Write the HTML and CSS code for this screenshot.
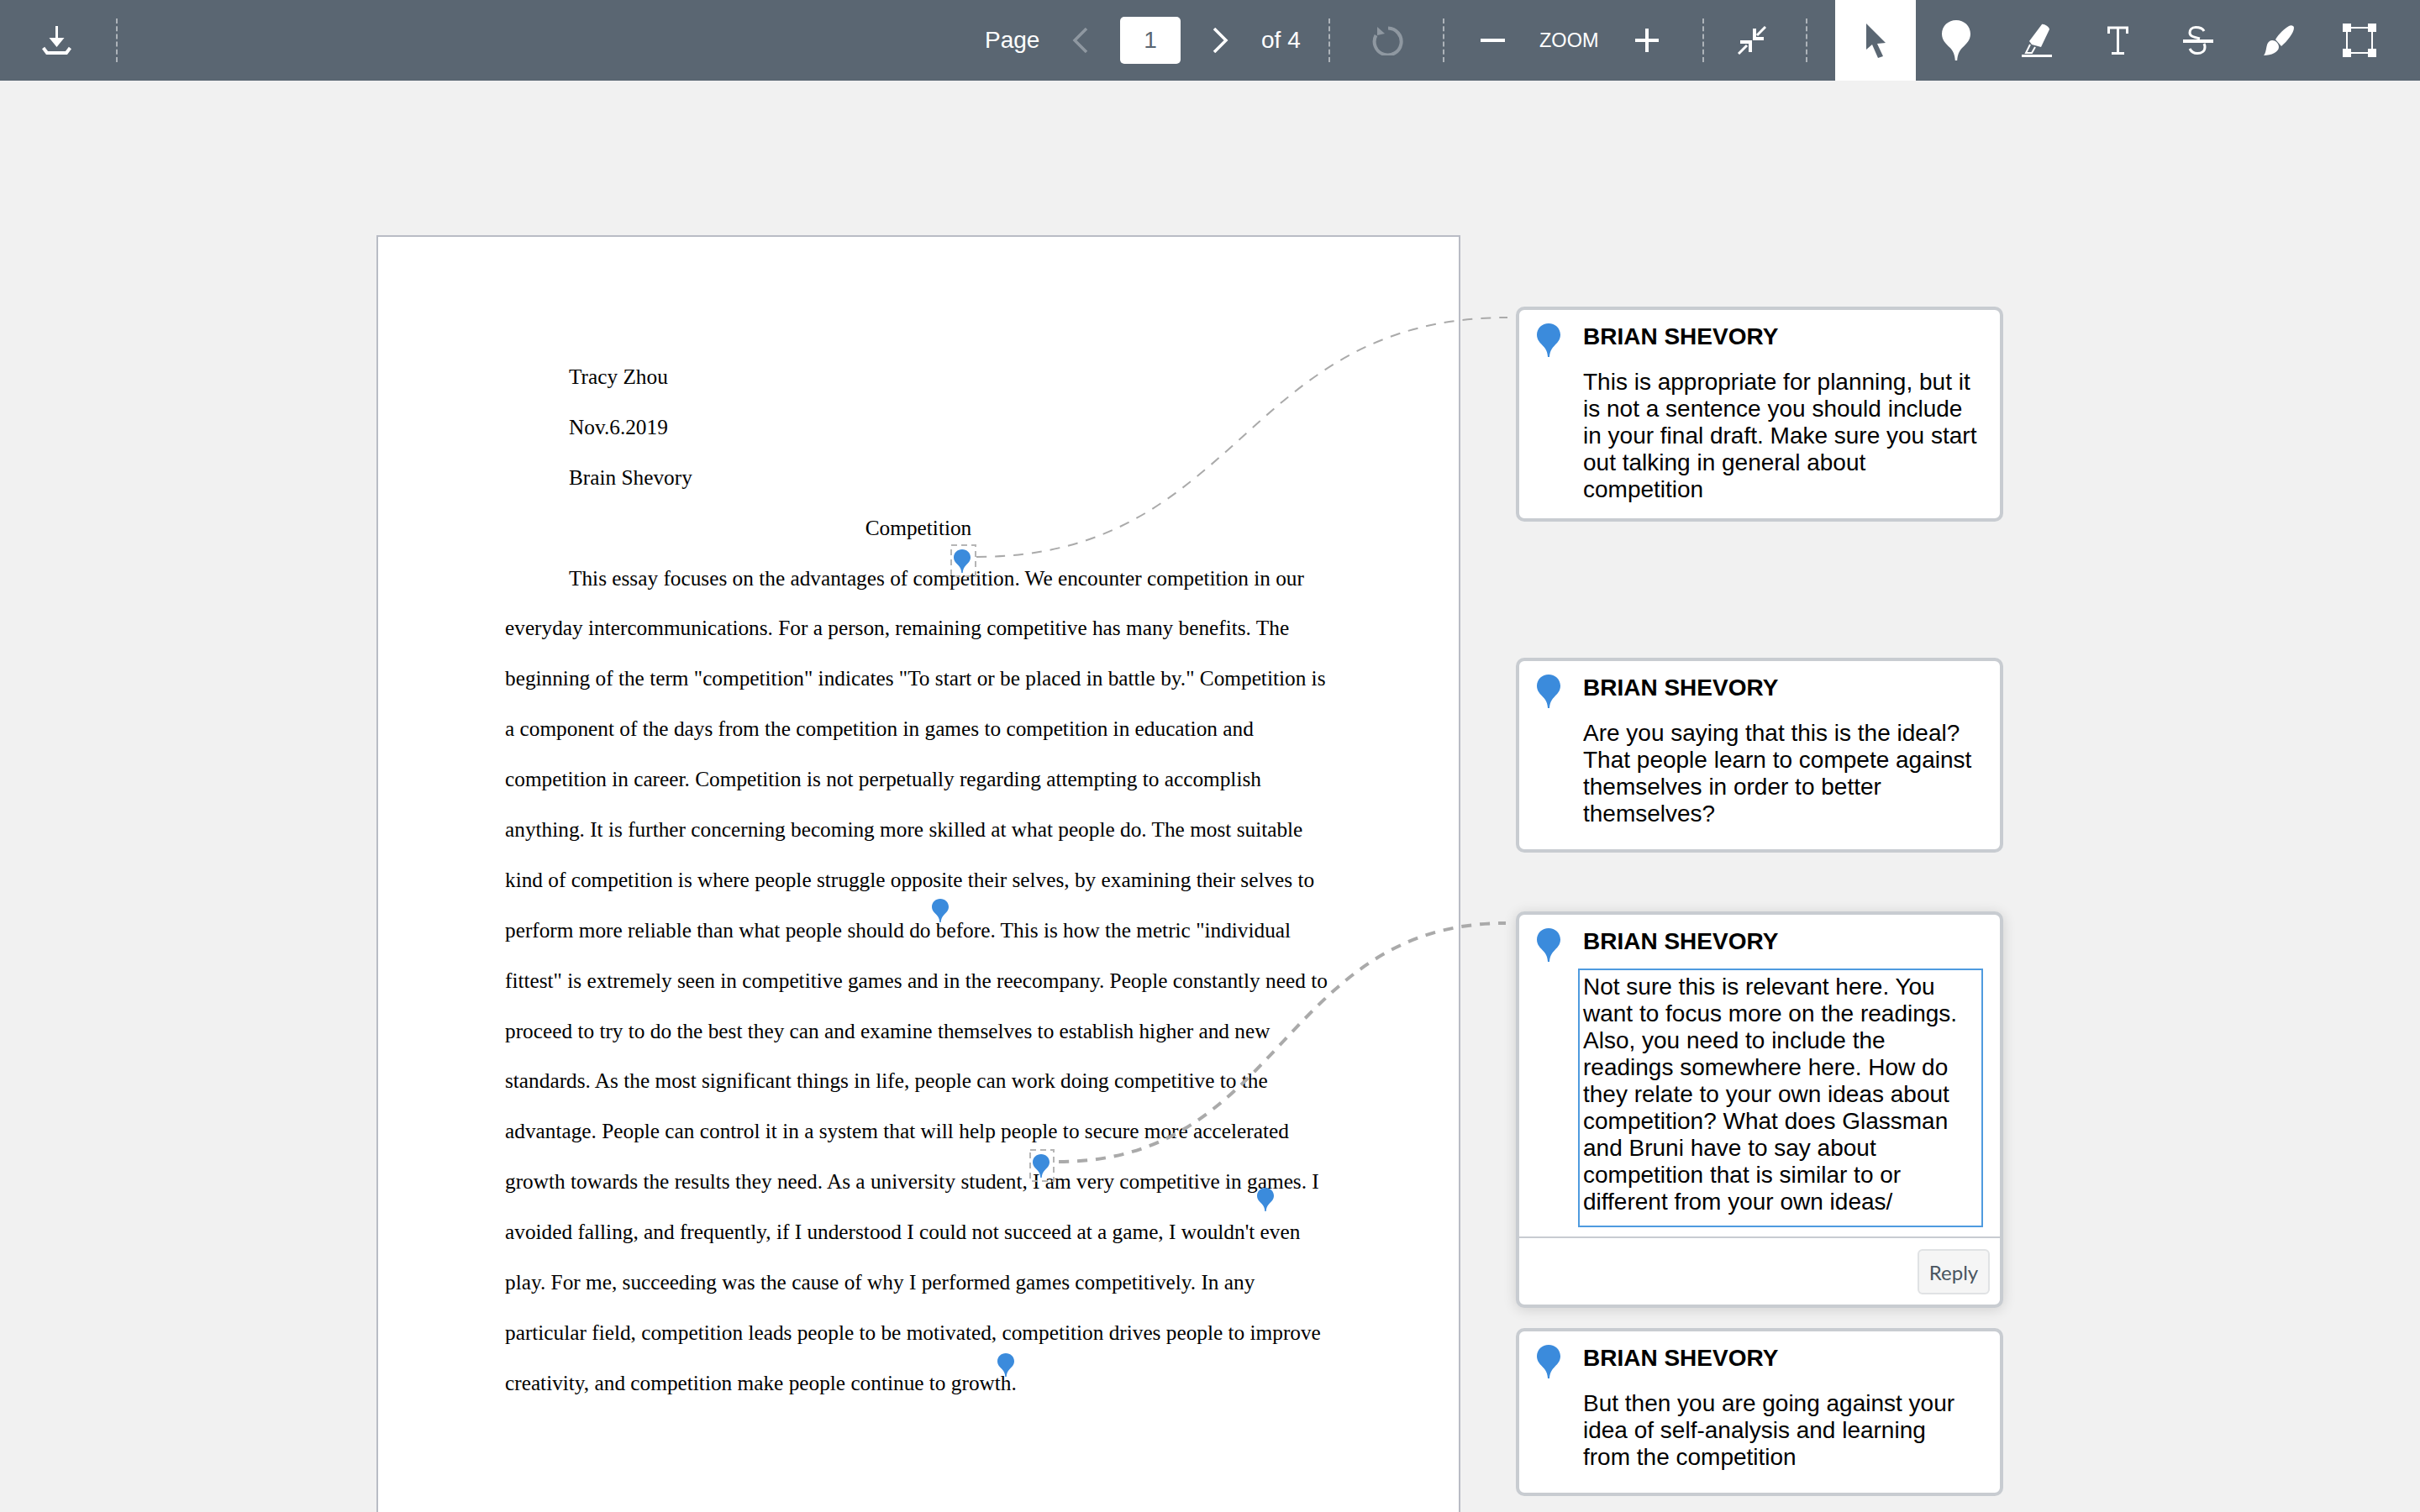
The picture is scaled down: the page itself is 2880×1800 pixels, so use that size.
FILE: index.html
```html
<!DOCTYPE html>
<html lang="en">

<head>
    <meta charset="UTF-8">
    <title>Annotated Document</title>
    <link rel="stylesheet" href="styles.css">
</head>

<body>
    <svg class="defs">
        <symbol id="pin" viewBox="0 0 20 28" preserveAspectRatio="none">
            <path d="M10 0C15.5 0 20 4 20 9.5C20 14 17 16.5 14.5 19C12 21.5 11 24 10.7 28H9.3C9 24 8 21.5 5.5 19C3 16.5 0 14 0 9.5C0 4 4.5 0 10 0Z" />
        </symbol>
    </svg>

    <header class="toolbar">
        <button class="icon-btn download">
            <svg width="35" height="34" viewBox="0 0 35 34"><path class="fill" d="M16 0H19V14H26.5L17.5 25L8.5 14H16Z" /><path class="line" stroke-width="4" d="M1.5 26L6 32H29L33.5 26" /></svg>
        </button>
        <span class="sep sep-first"></span>

        <span class="label page-label">Page</span>
        <svg class="prev" width="19" height="30" viewBox="0 0 19 30"><path class="line dim" stroke-width="3.5" d="M17 1L3 15L17 29" /></svg>
        <div class="page-input">1</div>
        <svg class="next" width="19" height="30" viewBox="0 0 19 30"><path class="line" stroke-width="3.5" d="M2 1L16 15L2 29" /></svg>
        <span class="label page-count">of 4</span>
        <span class="sep sep-count"></span>
        <svg class="rotate" width="38" height="36" viewBox="0 0 38 36"><path class="line dim" stroke-width="4" d="M19 3.5A16 16 0 1 1 4.5 12" /><path class="fill dim-fill" d="M6 2V12L15 10Z" /></svg>
        <span class="sep sep-rotate"></span>
        <svg class="minus" width="29" height="4" viewBox="0 0 29 4"><rect class="fill" width="29" height="4" /></svg>
        <span class="label zoom-label">ZOOM</span>
        <svg class="plus" width="28" height="28" viewBox="0 0 28 28"><path class="line" stroke-width="4" d="M14 0V28M0 14H28" /></svg>
        <span class="sep sep-plus"></span>
        <svg class="collapse" width="34" height="34" viewBox="0 0 34 34"><path class="line" stroke-width="4" d="M20 3V15H31M3 19H15V31" /><path class="line" stroke-width="3" d="M23 11L33 1M11 23L1 33" /></svg>
        <span class="sep sep-collapse"></span>

        <div class="tools">
            <button class="tool active">
                <svg width="23" height="41" viewBox="0 0 23 41"><path class="cursor" d="M0 0L23 23L13 24L20 39L14 41L7 25L0 31Z" /></svg>
            </button>
            <button class="tool">
                <svg class="pin-white" width="34" height="48"><use href="#pin" width="34" height="48" /></svg>
            </button>
            <button class="tool">
                <svg width="36" height="40" viewBox="0 0 36 40"><path class="fill" d="M24 1C26 0 33 4 33 7L23 28L12 25L9 21Z" /><path class="line" stroke-width="2" d="M10 25L5 35H12L16 28" /><rect class="fill" y="37" width="36" height="3" /></svg>
            </button>
            <button class="tool">
                <svg width="25" height="34" viewBox="0 0 25 34"><path class="line" stroke-width="3" d="M1.5 9V2H23.5V9M12.5 2V32M5 32.5H20" /></svg>
            </button>
            <button class="tool">
                <svg width="36" height="34" viewBox="0 0 36 34"><path class="line" stroke-width="3" d="M25 6C23 2 19 1.5 15 1.5C10 1.5 8 5 8 8C8 12 12 13 20 15M8 27C10 31 13 32.5 17 32.5C22 32.5 26 30 26 25C26 23.5 25.5 22 25 21" /><rect class="fill" y="16" width="36" height="4" /></svg>
            </button>
            <button class="tool">
                <svg width="36" height="36" viewBox="0 0 36 36"><path class="fill" d="M30 1C32 -.5 36 0 36 3C36 9 28 19 21 25L14 17C18 10 25 4 30 1Z" /><path class="fill" d="M0 36C4 32 2 22 7 19C11 16 18 20 18 26C18 32 9 36 0 36Z" /></svg>
            </button>
            <button class="tool">
                <svg width="40" height="40" viewBox="0 0 40 40"><rect class="line" stroke-width="2" x="5" y="5" width="30" height="30" /><path class="fill" d="M0 0H10V10H0ZM30 0H40V10H30ZM0 30H10V40H0ZM30 30H40V40H30Z" /></svg>
            </button>
        </div>
    </header>

    <main class="workspace">
        <article class="page">
            <div class="line-text indent">Tracy Zhou</div>
            <div class="line-text indent">Nov.6.2019</div>
            <div class="line-text indent">Brain Shevory</div>
            <div class="line-text center">Competition</div>
            <div class="line-text indent">This essay focuses on the advantages of competition. We encounter competition in our</div>
            <div class="line-text">everyday intercommunications. For a person, remaining competitive has many benefits. The</div>
            <div class="line-text">beginning of the term "competition" indicates "To start or be placed in battle by." Competition is</div>
            <div class="line-text">a component of the days from the competition in games to competition in education and</div>
            <div class="line-text">competition in career. Competition is not perpetually regarding attempting to accomplish</div>
            <div class="line-text">anything. It is further concerning becoming more skilled at what people do. The most suitable</div>
            <div class="line-text">kind of competition is where people struggle opposite their selves, by examining their selves to</div>
            <div class="line-text">perform more reliable than what people should do before. This is how the metric "individual</div>
            <div class="line-text">fittest" is extremely seen in competitive games and in the reecompany. People constantly need to</div>
            <div class="line-text">proceed to try to do the best they can and examine themselves to establish higher and new</div>
            <div class="line-text">standards. As the most significant things in life, people can work doing competitive to the</div>
            <div class="line-text">advantage. People can control it in a system that will help people to secure more accelerated</div>
            <div class="line-text">growth towards the results they need. As a university student, I am very competitive in games. I</div>
            <div class="line-text">avoided falling, and frequently, if I understood I could not succeed at a game, I wouldn't even</div>
            <div class="line-text">play. For me, succeeding was the cause of why I performed games competitively. In any</div>
            <div class="line-text">particular field, competition leads people to be motivated, competition drives people to improve</div>
            <div class="line-text">creativity, and competition make people continue to growth.</div>
        </article>

        <aside class="comments">
            <section class="card">
                <div class="card-main">
                    <svg class="card-pin" width="28" height="40"><use href="#pin" width="28" height="40" /></svg>
                    <div class="card-content">
                        <div class="card-name">BRIAN SHEVORY</div>
                        <p class="card-text">This is appropriate for planning, but it is not a sentence you should include in your final draft. Make sure you start out talking in general about competition</p>
                    </div>
                </div>
            </section>

            <section class="card card-second">
                <div class="card-main roomy">
                    <svg class="card-pin" width="28" height="40"><use href="#pin" width="28" height="40" /></svg>
                    <div class="card-content">
                        <div class="card-name">BRIAN SHEVORY</div>
                        <p class="card-text">Are you saying that this is the ideal? That people learn to compete against themselves in order to better themselves?</p>
                    </div>
                </div>
            </section>

            <section class="card card-third selected">
                <div class="card-main">
                    <svg class="card-pin" width="28" height="40"><use href="#pin" width="28" height="40" /></svg>
                    <div class="card-content">
                        <div class="card-name">BRIAN SHEVORY</div>
                        <div class="card-edit">Not sure this is relevant here. You want to focus more on the readings. Also, you need to include the readings somewhere here. How do they relate to your own ideas about competition? What does Glassman and Bruni have to say about competition that is similar to or different from your own ideas/</div>
                    </div>
                </div>
                <div class="card-footer">
                    <button class="reply">Reply</button>
                </div>
            </section>

            <section class="card card-fourth">
                <div class="card-main roomy">
                    <svg class="card-pin" width="28" height="40"><use href="#pin" width="28" height="40" /></svg>
                    <div class="card-content">
                        <div class="card-name">BRIAN SHEVORY</div>
                        <p class="card-text">But then you are going against your idea of self-analysis and learning from the competition</p>
                    </div>
                </div>
            </section>
        </aside>
    </main>

    <!-- pins and connectors sit over the document, in page coordinates -->
    <svg class="overlay" width="2880" height="1800" viewBox="0 0 2880 1800">
        <path class="connector" d="M1162 663C1478 663 1478 378 1794 378" />
        <path class="connector connector-active" d="M1260 1383C1526 1383 1526 1099 1792 1099" />
        <rect class="pin-box" x="1132" y="649" width="29" height="37" />
        <rect class="pin-box" x="1226" y="1369" width="28" height="37" />
        <use class="doc-pin" href="#pin" x="1135" y="654" width="20" height="28" />
        <use class="doc-pin" href="#pin" x="1109" y="1070" width="20" height="28" />
        <use class="doc-pin" href="#pin" x="1229" y="1374" width="20" height="28" />
        <use class="doc-pin" href="#pin" x="1496" y="1414" width="20" height="28" />
        <use class="doc-pin" href="#pin" x="1187" y="1611" width="20" height="28" />
    </svg>
</body>

</html>
```

FILE: styles.css
```css
body {
    margin: 0;
    height: 100vh;
    overflow: hidden;
    position: relative;
    background-color: #f1f1f1;
    font-family: "Liberation Sans", Arial, sans-serif;
    color: #000;
}

.defs {
    display: block;
    width: 0;
    height: 0;
}

button {
    border: 0;
    background: none;
    padding: 0;
    font-family: inherit;
}

/* toolbar */

.toolbar {
    display: flex;
    align-items: center;
    height: 96px;
    padding-left: 50px;
    background-color: #5a6672;
    color: #fff;
}

.toolbar svg {
    display: block;
    flex: none;
}

.fill {
    fill: #fff;
}

.line {
    fill: none;
    stroke: #fff;
}

.line.dim {
    stroke: #8f98a1;
}

.fill.dim-fill {
    fill: #8f98a1;
}

.icon-btn {
    display: block;
    width: 35px;
}

.sep {
    flex: none;
    width: 0;
    height: 52px;
    border-left: 2px dashed rgba(255, 255, 255, 0.5);
}

.label {
    flex: none;
    white-space: nowrap;
    font-size: 28px;
}

.sep-first { margin-left: 53px; }

.page-label { margin-left: 1032px; width: 65px; }
.prev { margin-left: 39px; }

.page-input {
    flex: none;
    width: 72px;
    height: 56px;
    margin-left: 38px;
    border-radius: 5px;
    background-color: #fff;
    color: #5a6672;
    font-size: 28px;
    line-height: 56px;
    text-align: center;
}

.next { margin-left: 38px; }
.page-count { margin-left: 39px; width: 45px; }
.sep-count { margin-left: 35px; }
.rotate { margin-left: 50px; }
.sep-rotate { margin-left: 46px; }
.minus { margin-left: 43px; }
.zoom-label { margin-left: 41px; width: 71px; font-size: 23.5px; }
.plus { margin-left: 43px; }
.sep-plus { margin-left: 52px; }
.collapse { margin-left: 40px; }
.sep-collapse { margin-left: 47px; }

.tools {
    display: flex;
    margin-left: 33px;
}

.tool {
    display: flex;
    align-items: center;
    justify-content: center;
    width: 96px;
    height: 96px;
}

.tool.active {
    background-color: #fff;
}

.cursor {
    fill: #5a6672;
}

.pin-white {
    fill: #fff;
}

/* document */

.workspace {
    display: flex;
    align-items: flex-start;
    padding: 184px 0 0 448px;
}

.page {
    flex: none;
    box-sizing: border-box;
    width: 1290px;
    height: 1600px;
    padding: 137px 151px 0;
    border: 2px solid #b9bcc5;
    background-color: #fff;
    font-family: "Liberation Serif", "Times New Roman", serif;
    font-size: 25.3px;
}

.line-text {
    height: 59.9px;
    line-height: 59.9px;
    white-space: nowrap;
}

.indent {
    padding-left: 76px;
}

.center {
    text-align: center;
}

/* comments */

.comments {
    flex: none;
    width: 580px;
    margin: 85px 0 0 66px;
}

.card {
    box-sizing: border-box;
    border: 4px solid #c8ccd1;
    border-radius: 10px;
    background-color: #fff;
}

.card-second { margin-top: 162px; }
.card-third { margin-top: 70px; }
.card-fourth { margin-top: 24px; }

.selected {
    box-shadow: 0 2px 16px rgba(0, 0, 0, 0.14);
}

.card-main {
    display: flex;
    padding: 16px 20px 18px 21px;
}

.card-main.roomy {
    padding-bottom: 26px;
}

.card-pin {
    display: block;
    flex: none;
    fill: #3b8bdc;
}

.card-content {
    flex: 1;
    min-width: 0;
    margin-left: 27px;
}

.card-name {
    font-size: 28px;
    font-weight: bold;
    line-height: 32px;
}

.card-text {
    margin: 22px 0 0;
    padding-right: 6px;
    font-size: 28px;
    line-height: 32px;
}

.card-edit {
    margin: 16px 0 0 -6px;
    padding: 4px 4px 12px;
    border: 2px solid #4f9bdf;
    font-size: 28px;
    line-height: 32px;
}

.selected .card-main {
    padding-bottom: 11px;
}

.card-footer {
    display: flex;
    justify-content: flex-end;
    padding: 13px 12px 12px;
    border-top: 2px solid #c8ccd1;
}

.reply {
    box-sizing: border-box;
    width: 86px;
    height: 54px;
    border: 2px solid #e0e2e4;
    border-radius: 6px;
    background-color: #f5f5f5;
    color: #4a5560;
    font-family: Lato, "Liberation Sans", sans-serif;
    font-size: 24px;
}

/* annotation layer */

.overlay {
    position: absolute;
    top: 0;
    left: 0;
    pointer-events: none;
}

.connector {
    fill: none;
    stroke: #aaa;
    stroke-width: 2;
    stroke-dasharray: 12 10;
}

.connector-active {
    stroke-width: 4;
}

.pin-box {
    fill: none;
    stroke: #b5b5b5;
    stroke-width: 2;
    stroke-dasharray: 7 5;
}

.doc-pin {
    fill: #3b8bdc;
}
```
